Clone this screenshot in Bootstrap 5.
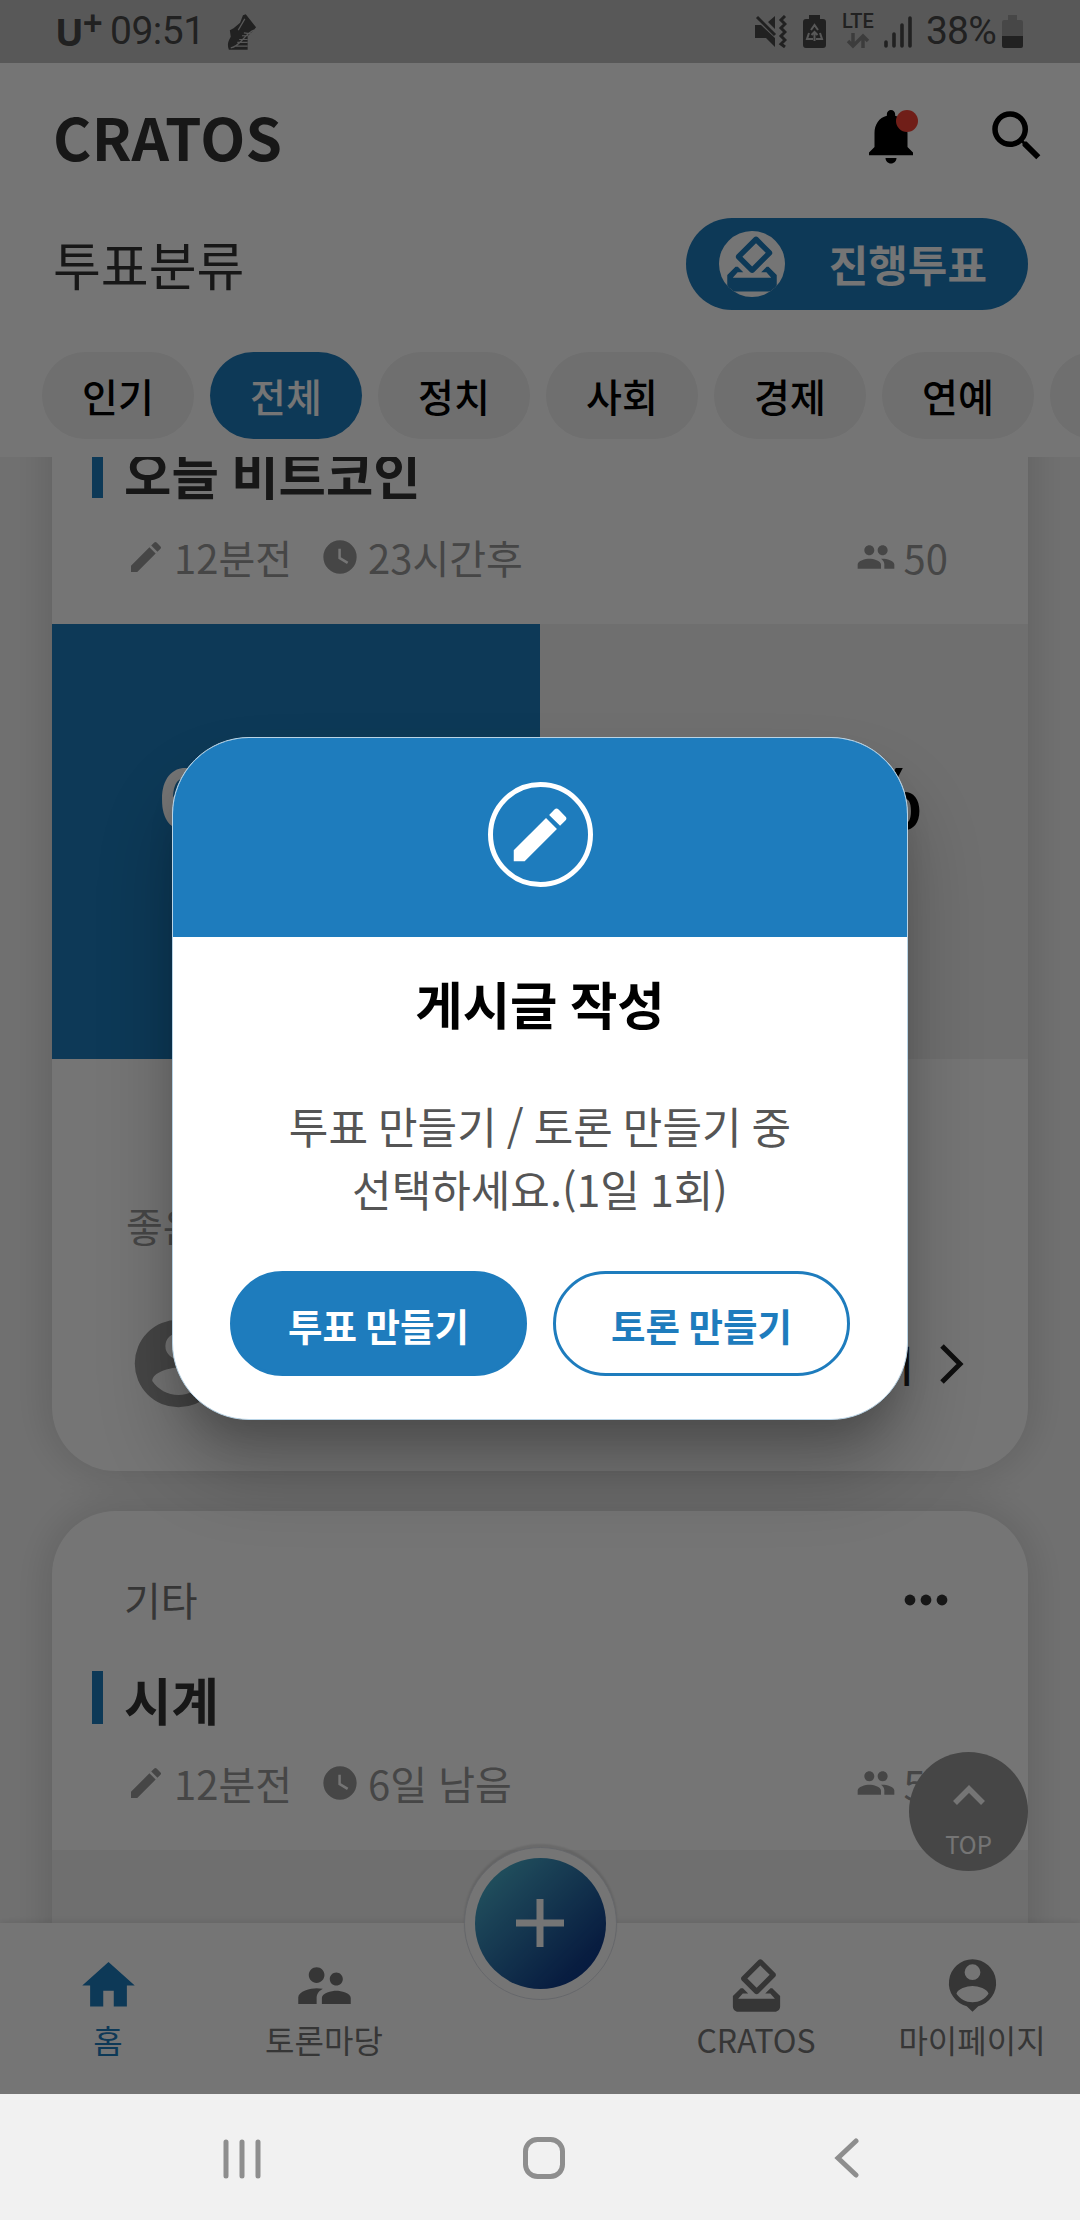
<!DOCTYPE html>
<html lang="ko">
<head>
<meta charset="utf-8">
<meta name="viewport" content="width=device-width, initial-scale=1">
<title>CRATOS</title>
<link href="https://cdn.jsdelivr.net/npm/bootstrap@5.3.0/dist/css/bootstrap.min.css" rel="stylesheet">
<style>
:root{--brand:#1e7cbd}
body{width:1080px;height:2220px;overflow:hidden;font-family:"Noto Sans CJK KR","Noto Sans",sans-serif;color:#333;background:#fff}
svg{display:block;flex:none;fill:currentColor}
.app-screen{height:2094px;background:#f5f5f5}
.status-row{height:63px;background:#c1c1c1;color:#484848;padding:0 57px 0 55px;font-family:Roboto,sans-serif;font-size:39px;line-height:65px}
.carrier{font:700 38px/63px "Noto Sans",sans-serif;width:45px}
.carrier sup{font-size:35px;top:-10px;left:-1px;line-height:0}
.clock-text{width:109px;letter-spacing:-.5px;margin-left:10px}
.lte{font:500 20px/15px Roboto,sans-serif;width:33px}
.app-head{height:394px;z-index:2}
.title-row{height:146px;padding:0 30px 0 53px}
.brand-name{font-size:58.5px;line-height:80px;letter-spacing:.4px;margin-top:-1px}
.bell-dot{width:22px;height:22px;background:#f44336;left:38px;top:7px}
.filter-row{height:92px;margin-top:9px;padding:0 52px 0 53px}
.filter-title{font-size:52px;line-height:76px}
.live-btn{width:342px;height:92px;border-radius:46px;background:var(--brand);color:#fff;padding:0 41px 0 33px;font-size:43px;line-height:60px}
.live-btn .txt{margin-top:-3px}
.live-ico{width:66px;height:66px;background:#fff;color:var(--brand);overflow:hidden}
.chip-row{gap:16px;margin-top:42px;padding-left:42px}
.chip{width:152px;height:87px;flex:none;border-radius:44px;background:#f1f1f1;color:#000;font-size:39px;font-weight:500;line-height:84px;text-align:center;padding-top:1px}
.chip.on{background:var(--brand);color:#fff}
.feed{height:1466px}
.feed-inner{margin:-172px 52px 0;gap:40px}
.vote-card{height:1186px;flex:none;border-radius:64px;background:#fff;box-shadow:0 0 46px rgba(0,0,0,.16);overflow:hidden}
.card-top{padding:59px 73px 0 72px;height:160px;font-size:40px;line-height:58px;color:#777}
.card-title-row{padding-left:40px;gap:21px;height:53px}
.title-bar{width:11px;height:53px;background:var(--brand)}
.card-title-text{font-size:51.5px;line-height:60px;padding-top:3px;word-spacing:-2px}
.meta-row{height:126px;padding:30px 80px 0 74px;font-size:40px;line-height:58px;color:#999}
.meta-row svg{margin-right:8px;margin-top:-1px}
.meta-row .second{margin-left:28px}
.result-row{height:435px;font-size:81px;letter-spacing:7px}
.half-a{background:var(--brand);color:#fff}
.half-b{background:#f1f1f1;color:#000}
.half-a,.half-b{line-height:339px;padding-left:7px}
.comment-line{color:#999;font-size:40px;line-height:58px;padding:137px 74px 0}
.join-row{padding:57px 54px 0 74px;color:#222;font-size:42px}
.join-row .ava{color:#999}
.tab-row{height:171px;box-shadow:0 -2px 6px rgba(0,0,0,.08);z-index:3}
.tab-item{width:216px;color:#777;font-size:32px;line-height:44px;padding-top:31px}
.tab-item.on{color:var(--brand)}
.fab-ring{width:153px;height:153px;left:463.5px;top:-76.5px;background:#fff;border:1px solid #dde0e8;box-shadow:0 -3px 2px rgba(0,0,0,.1)}
.fab-core{width:131px;height:131px;color:#fff;background:linear-gradient(135deg,#4cb4ce 8%,#3a8fbb 30%,#123f8c 80%,#08308c)}
.top-btn{width:119px;height:119px;right:52px;top:1752px;background:#999;color:#fff;font-size:24px;line-height:30px;padding-top:22px;z-index:4}
.dim{inset:0;background:rgba(0,0,0,.54);z-index:10;padding-top:63px}
.sheet{width:736px;height:683px;border-radius:77px;overflow:hidden;background:#fff;border:1px solid #b9d4e6;box-shadow:0 52px 76px rgba(0,0,0,.24),0 24px 34px -10px rgba(0,0,0,.16)}
.sheet-head{height:199px;background:var(--brand);color:#fff;padding-top:44px}
.pen-ring{width:105px;height:105px;border:5.5px solid #fff}
.sheet-title{font-size:51.5px;line-height:76px;color:#000;margin-top:28px;word-spacing:-2px}
.sheet-text{font-size:43px;line-height:63px;color:#555;margin-top:53px;word-spacing:-2px}
.sheet-btns{gap:26px;margin-top:51px}
.sheet-btn{width:297px;height:105px;border-radius:53px;font-size:37.5px;line-height:99px;border:3px solid var(--brand);color:var(--brand);background:#fff;padding:1px 0 0;word-spacing:-2px}
.sheet-btn.solid{background:var(--brand);color:#fff}
.sys-row{height:126px;background:#f1f1f1;color:#8e8e8e}
</style>
<script src="https://cdn.jsdelivr.net/npm/bootstrap@5.3.0/dist/js/bootstrap.bundle.min.js"></script>
</head>
<body>
<svg class="d-none">
  <symbol id="i-edit" viewBox="0 0 24 24"><path d="M3 17.25V21h3.75L17.81 9.94l-3.75-3.75zM20.71 7.04a1 1 0 0 0 0-1.41l-2.34-2.34a1 1 0 0 0-1.41 0l-1.83 1.83 3.75 3.75z"/></symbol>
  <symbol id="i-clock" viewBox="0 0 24 24"><path fill-rule="evenodd" d="M12 2a10 10 0 1 0 0 20 10 10 0 0 0 0-20zm4.2 14.2L11 13V7h1.5v5.2l4.5 2.7z"/></symbol>
  <symbol id="i-group" viewBox="0 0 24 24"><path d="M16 11c1.66 0 2.99-1.34 2.99-3S17.66 5 16 5s-3 1.34-3 3 1.34 3 3 3zm-8 0c1.66 0 2.99-1.34 2.99-3S9.66 5 8 5 5 6.34 5 8s1.34 3 3 3zm0 2c-2.33 0-7 1.17-7 3.5V19h14v-2.5c0-2.33-4.67-3.5-7-3.5zm8 0c-.29 0-.62.02-.97.05 1.16.84 1.97 1.97 1.97 3.45V19h6v-2.5c0-2.33-4.67-3.5-7-3.5z"/></symbol>
  <symbol id="i-vote" viewBox="0 0 24 24"><path d="M18 13h-.68l-2 2h1.91L19 17H5l1.78-2h2.05l-2-2H6l-3 3v4c0 1.1.89 2 1.99 2H19c1.1 0 2-.89 2-2v-4l-3-3zm-1-5.05-4.95 4.95-3.54-3.54 4.95-4.95L17 7.95zm-4.24-5.66L6.39 8.66c-.39.39-.39 1.02 0 1.41l4.95 4.95c.39.39 1.02.39 1.41 0l6.36-6.36c.39-.39.39-1.02 0-1.41L14.16 2.3c-.38-.4-1.01-.4-1.4-.01z"/></symbol>
</svg>

<div class="app-screen position-relative d-flex flex-column overflow-hidden">
  <div class="status-row d-flex align-items-center justify-content-between">
    <div class="d-flex align-items-center">
      <span class="carrier text-nowrap">U<sup>+</sup></span>
      <span class="clock-text">09:51</span>
      <svg class="ms-2" width="30" height="40" viewBox="0 0 32 40"><path d="M20 1 31 15C27 20 24 22 22 25V39H2C0 34 1 30 4 25L3 18 7 16 14 10 17 2z"/><path d="M29 18C19 21 15 35 4 37M13 28h9M11 31h11M8 35h14M16 24h7M18 21l8 1M19 6l-7 12" stroke="#c1c1c1" stroke-width="1.3" fill="none"/></svg>
    </div>
    <div class="d-flex align-items-center">
      <svg width="32" height="33" viewBox="0 0 32 33"><path d="M0 10h6l14 13v9l-9-9H0zM13 7l7-6v13z"/><path d="m2 2 18 18" stroke="currentColor" stroke-width="3"/><path d="m30 1-4 4 4 4-4 4 4 4-4 4 4 4-4 4 4 3" stroke="currentColor" stroke-width="3" fill="none"/></svg>
      <svg class="ms-3" width="23" height="33" viewBox="0 0 23 33"><path d="M6 0h11v4h3q3 0 3 3v23q0 3-3 3H3q-3 0-3-3V7q0-3 3-3h3z"/><path d="m8 15 3.500-5 3.500 5M6 18l-2 6h6M17 18l2 6h-6M11.500 26v-9m-3 3 3-3 3 3" fill="none" stroke="#c1c1c1" stroke-width="2"/></svg>
      <div class="ms-3 d-flex flex-column align-items-center">
        <span class="lte">LTE</span>
        <svg class="mt-1" width="24" height="16" viewBox="0 0 24 16" opacity=".5"><path d="M7 0v13M2 8l5 5 5-5M17 15V3M12 8l5-5 5 5" fill="none" stroke="currentColor" stroke-width="3.500"/></svg>
      </div>
      <svg style="margin-left:9px" width="29" height="32" viewBox="0 0 29 32"><path d="M2 26v4M10 18v12M18 9v21M26 2v28" stroke="currentColor" stroke-width="3.600" stroke-linecap="round"/></svg>
      <span style="margin-left:13px;letter-spacing:-.8px">38%</span>
      <svg style="margin-left:6px" width="21" height="33" viewBox="0 0 21 33"><path opacity=".3" d="M6 0h9v5h4q2 0 2 2v14H0V7q0-2 2-2h4z"/><path d="M0 21h21v10q0 2-2 2H2q-2 0-2-2z"/></svg>
    </div>
  </div>

  <header class="app-head bg-white position-relative overflow-hidden flex-shrink-0">
    <div class="title-row d-flex align-items-center justify-content-between">
      <div class="brand-name fw-bold">CRATOS</div>
      <div class="d-flex text-black" style="gap:60px">
        <div class="position-relative">
          <svg width="66" height="66" viewBox="0 0 24 24"><path d="M12 22c1.100 0 2-.9 2-2h-4c0 1.100.89 2 2 2zm6-6v-5c0-3.070-1.640-5.640-4.500-6.320V4c0-.83-.67-1.500-1.500-1.500s-1.500.67-1.500 1.500v.68C7.630 5.360 6 7.920 6 11v5l-2 2v1h16v-1l-2-2z"/></svg>
          <span class="bell-dot position-absolute rounded-circle"></span>
        </div>
        <svg width="66" height="66" viewBox="0 0 24 24"><path d="M15.500 14h-.79l-.28-.27A6.470 6.470 0 0 0 16 9.500 6.500 6.500 0 1 0 9.500 16c1.610 0 3.090-.59 4.230-1.570l.27.28v.79l5 4.990L20.490 19l-4.990-5zm-6 0C7.010 14 5 11.990 5 9.500S7.010 5 9.500 5 14 7.010 14 9.500 11.990 14 9.500 14z"/></svg>
      </div>
    </div>
    <div class="filter-row d-flex align-items-center justify-content-between">
      <div class="filter-title">투표분류</div>
      <div class="live-btn d-flex align-items-center justify-content-between fw-bold">
        <span class="live-ico rounded-circle"><svg width="66" height="66"><use href="#i-vote"/></svg></span><span class="txt">진행투표</span>
      </div>
    </div>
    <div class="chip-row d-flex">
      <div class="chip">인기</div><div class="chip on">전체</div><div class="chip">정치</div><div class="chip">사회</div><div class="chip">경제</div><div class="chip">연예</div><div class="chip"></div>
    </div>
  </header>

  <main class="feed overflow-hidden flex-shrink-0">
    <div class="feed-inner d-flex flex-column">
      <article class="vote-card">
        <div class="card-top"></div>
        <div class="card-title-row d-flex align-items-center"><span class="title-bar"></span><span class="card-title-text fw-bold">오늘 비트코인</span></div>
        <div class="meta-row d-flex align-items-start">
          <div class="d-flex align-items-center"><svg width="40" height="40"><use href="#i-edit"/></svg>12분전</div>
          <div class="second d-flex align-items-center"><svg width="40" height="40"><use href="#i-clock"/></svg>23시간후</div>
          <div class="d-flex align-items-center ms-auto"><svg width="40" height="40"><use href="#i-group"/></svg>50</div>
        </div>
        <div class="result-row d-flex fw-bold text-center">
          <div class="half-a w-50">60.0%</div>
          <div class="half-b w-50">40.0%</div>
        </div>
        <div class="comment-line">좋은</div>
        <div class="join-row d-flex align-items-center">
          <svg class="ava" width="105" height="105" viewBox="0 0 24 24"><path fill-rule="evenodd" d="M12 2a10 10 0 1 0 0 20 10 10 0 0 0 0-20zm0 3a3 3 0 1 1 0 6 3 3 0 0 1 0-6zm0 14.200c-2.500 0-4.710-1.280-6-3.200.03-2 4-3.100 6-3.100s5.970 1.100 6 3.100a7.200 7.200 0 0 1-6 3.200z"/></svg>
          <span class="ms-auto fw-medium">투표하기</span>
          <svg style="margin-left:20px" width="40" height="44" viewBox="0 0 40 44"><path d="m8 4 18 18L8 40" fill="none" stroke="currentColor" stroke-width="5"/></svg>
        </div>
      </article>

      <article class="vote-card">
        <div class="card-top d-flex justify-content-between align-items-start"><span>기타</span>
          <svg class="mt-4" width="60" height="12" viewBox="0 0 60 12"><g fill="#333"><circle cx="15" cy="6" r="5.400"/><circle cx="31" cy="6" r="5.400"/><circle cx="47" cy="6" r="5.400"/></g></svg>
        </div>
        <div class="card-title-row d-flex align-items-center"><span class="title-bar"></span><span class="card-title-text fw-bold">시계</span></div>
        <div class="meta-row d-flex align-items-start">
          <div class="d-flex align-items-center"><svg width="40" height="40"><use href="#i-edit"/></svg>12분전</div>
          <div class="second d-flex align-items-center"><svg width="40" height="40"><use href="#i-clock"/></svg>6일 남음</div>
          <div class="d-flex align-items-center ms-auto"><svg width="40" height="40"><use href="#i-group"/></svg>50</div>
        </div>
        <div class="result-row half-b"></div>
      </article>
    </div>
  </main>

  <nav class="tab-row bg-white position-relative d-flex flex-shrink-0">
    <div class="tab-item on d-flex flex-column align-items-center"><svg width="63" height="63" viewBox="0 0 24 24"><path d="M10 20v-6h4v6h5v-8h3L12 3 2 12h3v8z"/></svg><span>홈</span></div>
    <div class="tab-item d-flex flex-column align-items-center"><svg width="63" height="63" viewBox="0 0 24 24"><path d="M16.500 12c1.380 0 2.490-1.120 2.490-2.500S17.880 7 16.500 7 14 8.120 14 9.500s1.120 2.500 2.500 2.500zM9 11c1.660 0 2.990-1.340 2.990-3S10.660 5 9 5 6 6.340 6 8s1.340 3 3 3zm7.500 3c-1.830 0-5.500.92-5.500 2.750V19h11v-2.250c0-1.830-3.670-2.750-5.500-2.750zM9 13c-2.330 0-7 1.170-7 3.500V19h7v-2.250c0-.85.33-2.340 2.370-3.470C10.500 13.100 9.660 13 9 13z"/></svg><span>토론마당</span></div>
    <div class="tab-item"></div>
    <div class="tab-item d-flex flex-column align-items-center"><svg width="63" height="63"><use href="#i-vote"/></svg><span>CRATOS</span></div>
    <div class="tab-item d-flex flex-column align-items-center"><svg width="63" height="63" viewBox="0 0 24 24"><path fill-rule="evenodd" d="M12 2a9.100 9.100 0 0 0-2.200 17.900L12 22l2.200-2.100A9.100 9.100 0 0 0 12 2zm0 1.950a3 3 0 1 1 0 6 3 3 0 0 1 0-6zm0 14.450c-2.500 0-4.800-1.300-6.100-3.250.3-1.900 4-3 6.100-3s5.800 1.100 6.100 3c-1.300 1.950-3.600 3.250-6.100 3.250z"/></svg><span>마이페이지</span></div>
    <div class="fab-ring position-absolute rounded-circle d-flex align-items-center justify-content-center">
      <div class="fab-core rounded-circle d-flex align-items-center justify-content-center"><svg width="48" height="48" viewBox="0 0 48 48"><path d="M20.500 0h7v20.500H48v7H27.500V48h-7V27.500H0v-7h20.500z"/></svg></div>
    </div>
  </nav>

  <div class="top-btn position-absolute rounded-circle d-flex flex-column align-items-center">
    <svg width="36" height="40" viewBox="0 0 36 40"><path d="m4 29 14-14 14 14" fill="none" stroke="currentColor" stroke-width="5.500"/></svg>
    <span style="margin-top:15px">TOP</span>
  </div>

  <div class="dim position-absolute d-flex align-items-center justify-content-center">
    <section class="sheet text-center">
      <div class="sheet-head d-flex justify-content-center"><div class="pen-ring rounded-circle d-flex align-items-center justify-content-center"><svg width="70" height="70"><use href="#i-edit"/></svg></div></div>
      <div class="sheet-title fw-bold">게시글 작성</div>
      <div class="sheet-text">투표 만들기 / 토론 만들기 중<br>선택하세요.(1일 1회)</div>
      <div class="sheet-btns d-flex justify-content-center"><div class="sheet-btn solid fw-bold">투표 만들기</div><div class="sheet-btn fw-bold">토론 만들기</div></div>
    </section>
  </div>
</div>

<div class="sys-row position-relative d-flex align-items-center">
  <svg width="1080" height="126" viewBox="0 0 1080 126" fill="none" stroke="#8e8e8e" stroke-width="5" stroke-linecap="round" style="fill:none"><path d="M226 48v34M242 48v34M258 48v34M856 47l-18 17 18 17"/><rect x="525.500" y="45.500" width="37" height="37" rx="12"/></svg>
</div>
</body>
</html>
